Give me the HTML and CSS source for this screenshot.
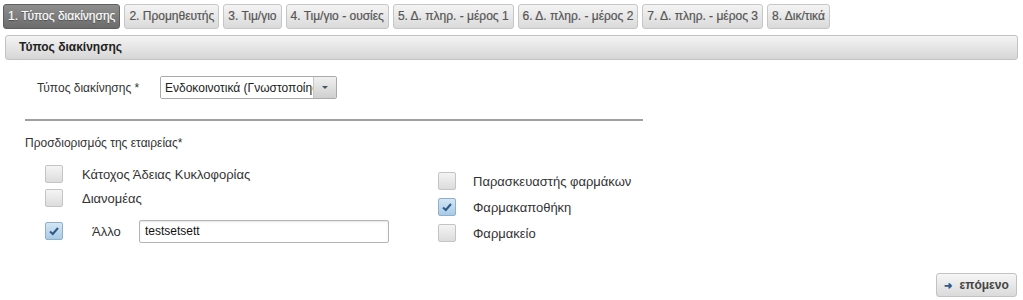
FILE: index.html
```html
<!DOCTYPE html>
<html lang="el">
<head>
    <meta charset="UTF-8">
    <title>Τύπος διακίνησης</title>
    <link rel="stylesheet" href="styles.css">
</head>
<body>
<div class="tabs">
    <div class="tab active">1. Τύπος διακίνησης</div>
    <div class="tab">2. Προμηθευτής</div>
    <div class="tab">3. Τιμ/γιο</div>
    <div class="tab">4. Τιμ/γιο - ουσίες</div>
    <div class="tab">5. Δ. πληρ. - μέρος 1</div>
    <div class="tab">6. Δ. πληρ. - μέρος 2</div>
    <div class="tab">7. Δ. πληρ. - μέρος 3</div>
    <div class="tab">8. Δικ/τικά</div>
</div>
<div class="panel-header">Τύπος διακίνησης</div>
<div class="form">
    <div class="type-row">
        <span class="type-label">Τύπος διακίνησης *</span>
        <div class="select">
            <select class="select-field">
                <option selected>Ενδοκοινοτικά (Γνωστοποίησης)</option>
            </select>
            <span class="select-btn"><span class="caret"></span></span>
        </div>
    </div>
    <div class="divider"></div>
    <div class="section-title">Προσδιορισμός της εταιρείας*</div>
    <div class="columns">
        <div class="col col-left">
            <div class="check-row"><span class="box"></span><span class="check-label">Κάτοχος Άδειας Κυκλοφορίας</span></div>
            <div class="check-row"><span class="box"></span><span class="check-label">Διανομέας</span></div>
            <div class="check-row other">
                <span class="box checked"><svg width="12" height="10" viewBox="0 0 12 10"><path d="M2 5.5 L4.8 8 L10 2" fill="none" stroke="#2e5a85" stroke-width="2"/></svg></span>
                <span class="check-label other-label">Άλλο</span>
                <input class="text-input" type="text" value="testsetsett">
            </div>
        </div>
        <div class="col col-right">
            <div class="check-row"><span class="box"></span><span class="check-label">Παρασκευαστής φαρμάκων</span></div>
            <div class="check-row"><span class="box checked"><svg width="12" height="10" viewBox="0 0 12 10"><path d="M2 5.5 L4.8 8 L10 2" fill="none" stroke="#2e5a85" stroke-width="2"/></svg></span><span class="check-label">Φαρμακαποθήκη</span></div>
            <div class="check-row"><span class="box"></span><span class="check-label">Φαρμακείο</span></div>
        </div>
    </div>
</div>
<div class="footer">
    <button class="next-btn"><span class="arrow">&#10140;</span> επόμενο</button>
</div>
</body>
</html>
```

FILE: styles.css
```css
body {
    margin: 0;
    font-family: 'Liberation Sans', Arial, sans-serif;
    font-size: 12px;
    color: #333;
    background: #fff;
}
.tabs {
    display: flex;
    gap: 4px;
    padding: 4px 0 0 3px;
}
.tab {
    height: 23px;
    line-height: 23px;
    padding: 0 4px;
    border: 1px solid #c6c6c6;
    border-radius: 3px;
    background: linear-gradient(to bottom, #f4f4f4, #dadada);
    color: #555;
    white-space: nowrap;
    -webkit-text-stroke: 0.2px #555;
}
.tab.active {
    background: linear-gradient(to bottom, #8e8e8e, #6c6c6c);
    border-color: #5e5e5e;
    color: #fff;
    -webkit-text-stroke: 0.2px #fff;
    text-shadow: 0 1px 1px rgba(0, 0, 0, 0.4);
}
.panel-header {
    margin: 6px 5px 0 5px;
    height: 23px;
    line-height: 23px;
    padding-left: 13px;
    border: 1px solid #c2c2c2;
    border-radius: 3px;
    background: linear-gradient(to bottom, #f4f4f4, #d6d6d6);
    font-weight: bold;
    color: #222;
}
.form {
    padding-left: 25px;
}
.type-row {
    display: flex;
    align-items: center;
    margin-top: 16px;
    padding-left: 12px;
}
.type-label {
    width: 123px;
}
.select {
    display: flex;
    width: 175px;
    height: 21px;
    border: 1px solid #aaa;
    border-radius: 2px;
    overflow: hidden;
}
.select-field {
    -webkit-appearance: none;
    appearance: none;
    flex: 1;
    min-width: 0;
    border: none;
    outline: none;
    background: #fff;
    height: 21px;
    padding: 0 0 0 4px;
    margin: 0;
    font-family: 'Liberation Sans', Arial, sans-serif;
    font-size: 12px;
    color: #222;
}
.select-btn {
    width: 22px;
    border-left: 1px solid #c8c8c8;
    background: linear-gradient(to bottom, #f0f0f0, #cfcfcf);
    display: flex;
    align-items: center;
    justify-content: center;
}
.caret {
    width: 0;
    height: 0;
    border-left: 3px solid transparent;
    border-right: 3px solid transparent;
    border-top: 3px solid #456;
}
.divider {
    width: 618px;
    height: 0;
    border-top: 2px solid #a0a0a0;
    margin-top: 20px;
}
.section-title {
    margin-top: 15px;
}
.columns {
    display: flex;
    margin-top: 15px;
    font-size: 13px;
}
.col {
    display: flex;
    flex-direction: column;
}
.col-left {
    padding-left: 20px;
    width: 393px;
}
.col-right {
    padding-top: 7px;
}
.check-row {
    display: flex;
    align-items: center;
    height: 18px;
    margin-bottom: 6px;
}
.col-right .check-row {
    margin-bottom: 8px;
}
.col-left .check-row.other {
    margin-top: 9px;
}
.box {
    width: 16px;
    height: 16px;
    border: 1px solid #c4c4c4;
    border-radius: 2px;
    background: linear-gradient(to bottom, #f4f4f4, #dcdcdc);
    display: flex;
    align-items: center;
    justify-content: center;
}
.box.checked {
    background: linear-gradient(to bottom, #d4e6f4, #a9cbe6);
    border-color: #8eb0cc;
}
.check-label {
    margin-left: 19px;
}
.col-right .check-label {
    margin-left: 17px;
}
.other-label {
    margin-left: 29px;
    width: 47px;
}
.text-input {
    box-sizing: border-box;
    width: 250px;
    height: 23px;
    padding: 0 0 0 5px;
    margin: 0;
    border: 1px solid #b5b5b5;
    border-radius: 2px;
    font-family: 'Liberation Sans', Arial, sans-serif;
    font-size: 12px;
    color: #111;
    box-shadow: inset 0 1px 2px rgba(0, 0, 0, 0.1);
    outline: none;
}
.footer {
    display: flex;
    justify-content: flex-end;
    padding-right: 6px;
    margin-top: 23px;
}
.next-btn {
    height: 24px;
    width: 81px;
    border: 1px solid #c2c2c2;
    border-radius: 3px;
    background: linear-gradient(to bottom, #f6f6f6, #dadada);
    font-family: 'Liberation Sans', Arial, sans-serif;
    font-size: 12px;
    font-weight: bold;
    color: #444;
    padding: 0;
}
.arrow {
    color: #2e5a85;
    font-size: 10px;
    margin-right: 4px;
}
```
